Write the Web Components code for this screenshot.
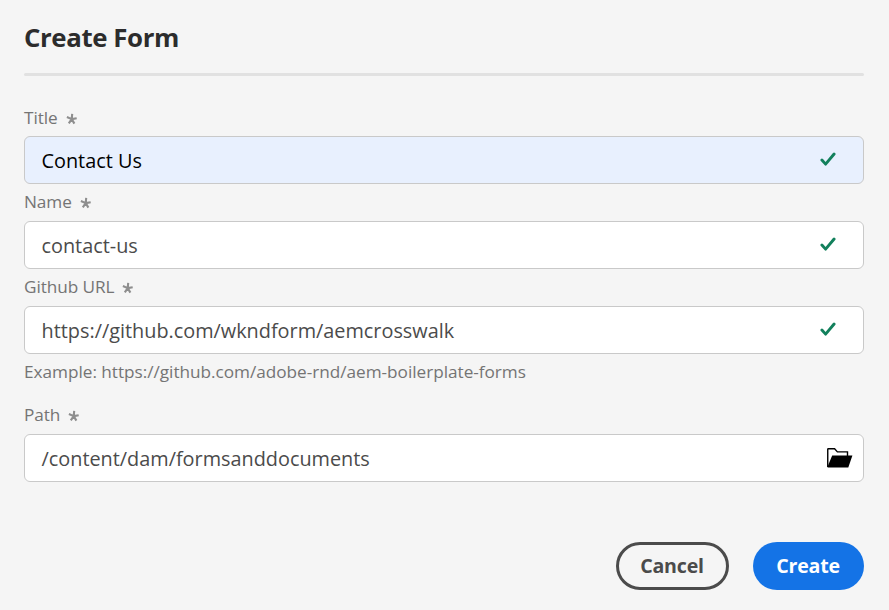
<!DOCTYPE html>
<html lang="en">
<head>
<meta charset="utf-8">
<title>Create Form</title>
<style>
body{margin:0;background:#f5f5f5;font-family:"Open Sans","Noto Sans",sans-serif}
</style>
</head>
<body>
<create-form></create-form>
<script>
const define = (name, html, init) => {
  const template = document.createElement('template');
  template.innerHTML = html;
  customElements.define(name, class extends HTMLElement {
    constructor() {
      super();
      this.attachShadow({mode: 'open'}).append(template.content.cloneNode(true));
    }
    connectedCallback() { if (init) init(this); }
  });
};

define('check-icon', `
<style>:host{display:block;width:16px;height:14px}svg{display:block}</style>
<svg width="16" height="14" viewBox="0 0 16 14"><path d="M1.9 8 5.6 12.1 14.1 2" fill="none" stroke="#12805c" stroke-width="2.9" stroke-linecap="round" stroke-linejoin="round"/></svg>`);

define('folder-icon', `
<style>:host{display:block;width:26px;height:20px}svg{display:block}</style>
<svg width="26" height="20" viewBox="0 0 26 20"><path d="M.75 19V1.2Q.75.75 1.3.75H7.6L10.4 3.9H20.5V8" fill="none" stroke="#000" stroke-width="1.4"/><path d="M5.2 7.5H25.4L21.3 19.6H.6V18.5Z"/></svg>`);

define('required-mark', `
<style>:host{display:block;width:12px;height:12px}svg{display:block}</style>
<svg width="12" height="12" viewBox="0 0 12 12"><path d="M5.7 6.1 6.2.9M5.7 6.1 10.7 5.2M5.7 6.1 8.4 10.6M5.7 6.1 2.8 10.4M5.7 6.1.9 4" fill="none" stroke="#8e8e8e" stroke-width="2.1"/></svg>`);

define('form-field', `
<style>
:host{display:block;height:85px;color:#4b4b4b}
.label{box-sizing:border-box;display:flex;height:27px;gap:8px;align-items:center;padding-bottom:var(--label-gap,12px);font-size:17.2px;line-height:15px;color:#747474}
.label span{letter-spacing:-.08px}
required-mark{margin-top:2px}
.box{box-sizing:border-box;height:48px;border:1px solid #c9c9c9;border-radius:6px;background:var(--field-fill,#fff);display:flex;align-items:center;justify-content:space-between;padding:0 27px 2px 16.5px}
.value{font-size:19.85px;line-height:28px;padding-top:3px}
:host([browse]) .box{padding-right:10px;padding-bottom:1px}
:host([browse]) .value{padding-top:2px}
</style>
<div class="label"><span></span><required-mark></required-mark></div>
<div class="box"><div class="value"><slot></slot></div><slot name="icon"></slot></div>
<slot name="help"></slot>`, el => {
  el.shadowRoot.querySelector('.label span').textContent = el.getAttribute('label');
});

define('form-button', `
<style>
:host{display:flex;box-sizing:border-box;height:48px;border-radius:24px;align-items:center;justify-content:center;font-weight:700;font-size:19.6px;line-height:26px;letter-spacing:-.2px;padding:0 1px 1px 0}
:host([variant=outline]){width:113px;border:3px solid #4b4b4b;color:#4b4b4b}
:host([variant=primary]){width:111px;background:#1473e6;color:#fff}
</style>
<slot></slot>`);

define('create-form', `
<style>
:host{display:block;box-sizing:border-box;height:610px;padding:20px 25px 20px 24px}
h1{margin:0;height:53px;font-size:25.8px;line-height:35px;font-weight:700;color:#2c2c2c;letter-spacing:-.4px}
hr{margin:0;border:0;height:3px;border-radius:2px;background:#e1e1e1}
.fields{padding-top:33px}
form-field:first-child{color:#000;--field-fill:#e8f0fe;--label-gap:10px}
.github{height:128px}
.help{font-size:17.2px;line-height:24px;padding-top:6px;color:#747474;letter-spacing:-.02px}
.actions{display:flex;justify-content:flex-end;gap:24px;padding-top:50px}
</style>
<h1>Create Form</h1><hr>
<div class="fields">
<form-field label="Title">Contact Us<check-icon slot="icon"></check-icon></form-field>
<form-field label="Name">contact-us<check-icon slot="icon"></check-icon></form-field>
<form-field label="Github URL" class="github">https://github.com/wkndform/aemcrosswalk<check-icon slot="icon"></check-icon><div class="help" slot="help">Example: https://github.com/adobe-rnd/aem-boilerplate-forms</div></form-field>
<form-field label="Path" browse>/content/dam/formsanddocuments<folder-icon slot="icon"></folder-icon></form-field>
</div>
<div class="actions"><form-button variant="outline">Cancel</form-button><form-button variant="primary">Create</form-button></div>`);
</script>
</body>
</html>
